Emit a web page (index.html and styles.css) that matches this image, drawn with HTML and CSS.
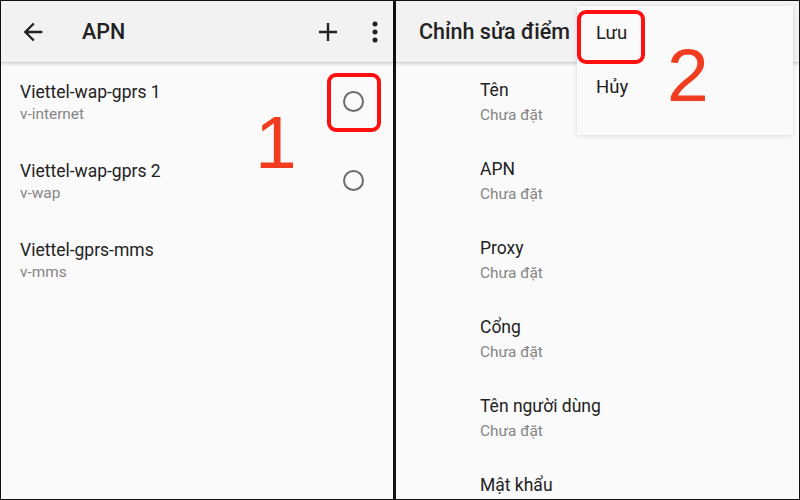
FILE: index.html
```html
<!DOCTYPE html>
<html lang="vi">
<head>
<meta charset="utf-8">
<title>APN</title>
<link rel="stylesheet" href="styles.css">
</head>
<body>
<div class="frame">
  <section class="panel panel-left">
    <header class="appbar">
      <svg class="icon-back" width="28" height="28" viewBox="0 0 24 24"><path d="M20 11H7.83l5.59-5.59L12 4l-8 8 8 8 1.41-1.41L7.83 13H20v-2z" fill="#222"/></svg>
      <h1 class="appbar-title">APN</h1>
      <div class="appbar-actions">
        <svg class="icon-add" width="20" height="20" viewBox="0 0 20 20"><path d="M10 1v18M1 10h18" stroke="#222" stroke-width="2.4" fill="none"/></svg>
        <svg class="icon-more" width="8" height="22" viewBox="0 0 8 22"><circle cx="4" cy="3" r="2.5" fill="#222"/><circle cx="4" cy="11" r="2.5" fill="#222"/><circle cx="4" cy="19" r="2.5" fill="#222"/></svg>
      </div>
    </header>
    <ul class="apn-list">
      <li class="apn-item">
        <div class="apn-text"><div class="apn-name">Viettel-wap-gprs 1</div><div class="apn-sub">v-internet</div></div>
        <span class="radio"></span>
      </li>
      <li class="apn-item">
        <div class="apn-text"><div class="apn-name">Viettel-wap-gprs 2</div><div class="apn-sub">v-wap</div></div>
        <span class="radio"></span>
      </li>
      <li class="apn-item">
        <div class="apn-text"><div class="apn-name">Viettel-gprs-mms</div><div class="apn-sub">v-mms</div></div>
      </li>
    </ul>
  </section>
  <div class="divider"></div>
  <section class="panel panel-right">
    <header class="appbar appbar-right">
      <h1 class="appbar-title edit-title">Chỉnh sửa điểm</h1>
    </header>
    <ul class="field-list">
      <li class="field"><div class="field-name">Tên</div><div class="field-sub">Chưa đặt</div></li>
      <li class="field"><div class="field-name">APN</div><div class="field-sub">Chưa đặt</div></li>
      <li class="field"><div class="field-name">Proxy</div><div class="field-sub">Chưa đặt</div></li>
      <li class="field"><div class="field-name">Cổng</div><div class="field-sub">Chưa đặt</div></li>
      <li class="field"><div class="field-name">Tên người dùng</div><div class="field-sub">Chưa đặt</div></li>
      <li class="field"><div class="field-name">Mật khẩu</div></li>
    </ul>
  </section>

  <div class="menu">
    <div class="menu-item">Lưu</div>
    <div class="menu-item">Hủy</div>
  </div>

  <div class="mark mark-1"></div>
  <div class="mark mark-2"></div>
  <div class="num num-1">1</div>
  <div class="num num-2">2</div>
</div>
</body>
</html>
```
FILE: styles.css
```css
* { box-sizing: border-box; }
html, body { margin: 0; padding: 0; }
body { background: #fff; font-family: Roboto, "Noto Sans", Arial, sans-serif; }

.frame {
  position: relative;
  width: 800px;
  height: 500px;
  border: 1px solid #111;
  display: flex;
  overflow: hidden;
  background: #fafafa;
}

.panel { display: flex; flex-direction: column; background: #fafafa; }
.panel-left { width: 392px; }
.divider { width: 3px; background: #111; }
.panel-right { flex: 1; }

.appbar {
  height: 62px;
  flex: none;
  display: flex;
  align-items: center;
  background: #f2f2f2;
  padding: 0 0 0 18px;
  border-bottom: 1px solid #d4d4d4;
  box-shadow: 0 2px 2px rgba(0,0,0,0.09);
  position: relative;
  z-index: 1;
}
.icon-back { display: block; }
.appbar-title {
  margin: 0 0 0 35px;
  font-size: 21.5px;
  font-weight: 500;
  color: #222;
}
.appbar-actions {
  margin-left: auto;
  display: flex;
  align-items: center;
  gap: 33px;
  padding-right: 14px;
}
.icon-add, .icon-more { display: block; }

.apn-list, .field-list { list-style: none; margin: 0; padding: 0; }

.apn-item {
  height: 79px;
  display: flex;
  align-items: flex-start;
  padding: 18px 29px 0 19px;
}
.apn-text { flex: 1; }
.apn-name { font-size: 17.5px; line-height: 22px; color: #222; }
.apn-sub { font-size: 15.4px; line-height: 22px; color: #858585; }
.radio {
  width: 21px;
  height: 21px;
  border: 2px solid #6b6b6b;
  border-radius: 50%;
  margin-top: 10px;
}

.appbar-right { padding-left: 23px; }
.edit-title { margin-left: 0; }

.field {
  height: 79px;
  padding: 15px 0 0 84px;
}
.field-name { font-size: 17.5px; line-height: 24px; color: #222; }
.field-sub { font-size: 15.4px; line-height: 26px; color: #858585; }

.menu {
  position: absolute;
  left: 576px;
  top: 5px;
  width: 216px;
  height: 129px;
  background: #fafafa;
  box-shadow: 0 1px 5px rgba(0,0,0,0.13);
  z-index: 3;
}
.menu-item {
  height: 54px;
  line-height: 54px;
  padding-left: 19px;
  font-size: 18.5px;
  color: #222;
}

.mark {
  position: absolute;
  border: 4px solid #ff1010;
  border-radius: 9px;
  z-index: 5;
}
.mark-1 { left: 326px; top: 72px; width: 54px; height: 59px; }
.mark-2 { left: 576px; top: 9px; width: 68px; height: 54px; }

.num {
  position: absolute;
  font-family: "Liberation Sans", Arial, sans-serif;
  font-size: 75px;
  line-height: 75px;
  color: #f23c1f;
  z-index: 5;
}
.num-1 { left: 254px; top: 104px; }
.num-2 { left: 666px; top: 37px; }
```
